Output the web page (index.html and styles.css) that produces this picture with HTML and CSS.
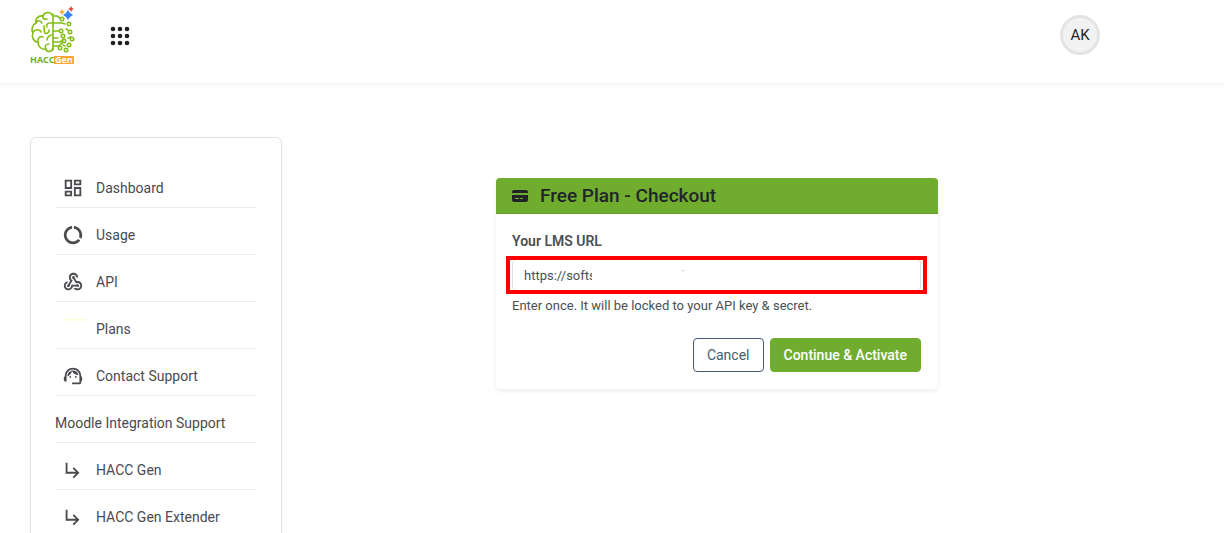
FILE: index.html
```
<!DOCTYPE html>
<html lang="en">
<head>
<meta charset="UTF-8">
<meta name="viewport" content="width=device-width, initial-scale=1.0">
<title>Free Plan - Checkout</title>
    <link rel="stylesheet" href="styles.css">
</head>
<body>
    <header class="topbar">
        <a href="#" class="logo" aria-label="HACC Gen">
            <svg width="46" height="60" viewBox="0 0 46 60">
                <!-- left half: brain -->
                <g fill="none" stroke="#84bd16" stroke-width="1.6" stroke-linecap="round" stroke-linejoin="round">
                    <path d="M22 9C20 5 14 6 13 10C8 9 5 13 6 17C2 19 1 24 3 27C1 31 4 36 8 36C8 41 12 44 16 43C17 47 22 46 23 42"/>
                    <path d="M13 10C12 12 14 14 17 13M6 17C7 14 11 14 12 17M3 26C5 23 10 23 11 26M8 36C7 32 10 30 13 31M16 43C14 40 16 38 19 38M22 17H20C17 17 16 19 17 21M14 20C15 23 13 25 15 27C17 28 19 27 19 24M22 29C20 29 17 31 17 34"/>
                    <path d="M23 8V44"/>
                    <!-- right half: circuit -->
                    <path d="M23 10H27L30 12M23 17H32L35 18M23 25H29M23 32H28M23 36H30L34 33M23 40H29L33 36"/>
                    <circle cx="32" cy="13" r="1.7"/>
                    <circle cx="39" cy="18" r="1.7"/>
                    <circle cx="31" cy="25" r="1.7"/>
                    <circle cx="40" cy="26" r="1.7"/>
                    <circle cx="42" cy="33" r="1.7"/>
                    <circle cx="33" cy="30" r="1.7"/>
                    <circle cx="34" cy="35" r="1.7"/>
                    <circle cx="39" cy="39" r="1.7"/>
                    <circle cx="30" cy="42" r="1.7"/>
                    <circle cx="36" cy="44" r="1.7"/>
                    <path d="M38 24L36 23M41 31L38 32M35 40L33 39"/>
                </g>
                <!-- sparkles -->
                <path fill="#3b82f6" d="M38 4L40 7L43 9L40 11L38 14L36 11L33 9L36 7Z"/>
                <path fill="#fba72c" d="M32 3L33 5L35 6L33 7L32 9L31 7L29 6L31 5Z"/>
                <path fill="#ea4335" d="M41 0L42 2L44 3L42 4L41 6L40 4L38 3L40 2Z"/>
                <rect x="24" y="50" width="20" height="8" fill="#fba72c"/>
                <text class="logo-hacc" x="0" y="57">HACC</text>
                <text class="logo-gen" x="25" y="57">Gen</text>
            </svg>
        </a>
        <button type="button" class="apps" aria-label="Apps">
            <svg width="20" height="20" viewBox="0 0 20 20" fill="#202124">
                <circle cx="3" cy="3" r="2.3"/><circle cx="10" cy="3" r="2.3"/><circle cx="17" cy="3" r="2.3"/>
                <circle cx="3" cy="10" r="2.3"/><circle cx="10" cy="10" r="2.3"/><circle cx="17" cy="10" r="2.3"/>
                <circle cx="3" cy="17" r="2.3"/><circle cx="10" cy="17" r="2.3"/><circle cx="17" cy="17" r="2.3"/>
            </svg>
        </button>
        <button type="button" class="avatar">AK</button>
    </header>

    <div class="page">
        <nav class="sidebar">
            <ul class="menu">
                <li><a href="#">
                    <svg class="icon" viewBox="0 0 24 24"><path d="M19 5v2h-4V5h4M9 5v6H5V5h4m10 8v6h-4v-6h4M9 17v2H5v-2h4M21 3h-8v6h8V3zM11 3H3v10h8V3zm10 8h-8v10h8V11zm-10 4H3v6h8v-6z"/></svg>
                    Dashboard</a></li>
                <li><a href="#">
                    <svg class="icon" viewBox="0 0 24 24"><path d="M13 2.050v3.030c3.390.490 6 3.390 6 6.920 0 .900-.180 1.750-.480 2.540l2.600 1.530c.560-1.240.880-2.620.880-4.070 0-5.180-3.950-9.450-9-9.950zM12 19c-3.870 0-7-3.130-7-7 0-3.530 2.610-6.430 6-6.920V2.050c-5.060.500-9 4.760-9 9.950 0 5.520 4.470 10 9.990 10 3.310 0 6.240-1.610 8.060-4.090l-2.600-1.530C16.170 17.980 14.210 19 12 19z"/></svg>
                    Usage</a></li>
                <li><a href="#">
                    <svg class="icon" viewBox="0 0 24 24"><path d="M10 15h5.880c.270-.310.670-.500 1.120-.500.830 0 1.500.670 1.500 1.500s-.670 1.500-1.500 1.500c-.440 0-.840-.190-1.120-.500H11.900c-.460 2.280-2.480 4-4.900 4-2.760 0-5-2.240-5-5 0-2.420 1.720-4.440 4-4.900v2.070c-1.160.420-2 1.530-2 2.830 0 1.650 1.350 3 3 3s3-1.350 3-3v-1zm2.500-11c1.650 0 3 1.350 3 3h2c0-2.760-2.240-5-5-5s-5 2.240-5 5c0 1.430.600 2.710 1.550 3.620l-2.350 3.900c-.680.140-1.200.750-1.200 1.480 0 .830.670 1.500 1.500 1.500s1.500-.670 1.500-1.500c0-.160-.020-.310-.070-.450l3.380-5.630C10.490 9.610 9.500 8.420 9.500 7c0-1.650 1.350-3 3-3zm4.500 9c-.640 0-1.230.200-1.720.540l-3.050-5.070C11.530 8.350 11 7.740 11 7c0-.830.670-1.500 1.500-1.500S14 6.170 14 7c0 .150-.020.290-.060.430l2.190 3.650c.280-.050.570-.080.870-.080 2.760 0 5 2.240 5 5s-2.240 5-5 5c-1.850 0-3.470-1.010-4.330-2.500h2.670c.480.320 1.050.500 1.660.500 1.650 0 3-1.350 3-3s-1.350-3-3-3z"/></svg>
                    API</a></li>
                <li><a href="#">
                    <svg class="icon icon-plans" viewBox="0 0 24 24"><path d="M2 1h24v2H2z"/></svg>
                    Plans</a></li>
                <li><a href="#">
                    <svg class="icon" viewBox="0 0 24 24"><path d="M21 12.220C21 6.730 16.740 3 12 3c-4.690 0-9 3.650-9 9.280-.600.340-1 .980-1 1.720v2c0 1.100.900 2 2 2h1v-6.100c0-3.870 3.130-7 7-7s7 3.130 7 7V19h-8v2h8c1.100 0 2-.900 2-2v-1.220c.590-.310 1-.920 1-1.640v-2.300c0-.700-.410-1.310-1-1.620z"/><circle cx="9" cy="13" r="1"/><circle cx="15" cy="13" r="1"/><path d="M18 11.030C17.520 8.180 15.040 6 12.050 6c-3.030 0-6.290 2.510-6.030 6.450 2.470-1.010 4.330-3.210 4.860-5.890 1.310 2.630 4 4.440 7.120 4.470z"/></svg>
                    Contact Support</a></li>
                <li><a href="#" class="plain">Moodle Integration Support</a></li>
                <li><a href="#">
                    <svg class="icon" viewBox="0 0 24 24"><path d="M19 15l-6 6-1.420-1.420L15.170 16H4V4h2v10h9.170l-3.590-3.580L13 9l6 6z"/></svg>
                    HACC Gen</a></li>
                <li><a href="#">
                    <svg class="icon" viewBox="0 0 24 24"><path d="M19 15l-6 6-1.420-1.420L15.170 16H4V4h2v10h9.170l-3.590-3.580L13 9l6 6z"/></svg>
                    HACC Gen Extender</a></li>
            </ul>
        </nav>

        <main class="content">
            <form class="card">
                <h1 class="card-header">
                    <svg width="16" height="16" viewBox="0 0 16 16" fill="#212529"><path d="M0 4a2 2 0 0 1 2-2h12a2 2 0 0 1 2 2v1H0zM0 7v5a2 2 0 0 0 2 2h12a2 2 0 0 0 2-2V7zM3 10h4v1H3zM8 10h3v1H8z" fill-rule="evenodd"/></svg>
                    Free Plan - Checkout
                </h1>
                <div class="card-body">
                    <label for="lms_url">Your LMS URL</label>
                    <div class="field">
                        <input type="text" id="lms_url" value="https://softs">
                        <span class="mask"></span>
                    </div>
                    <p class="help">Enter once. It will be locked to your API key &amp; secret.</p>
                    <div class="actions">
                        <button type="button" class="btn btn-outline">Cancel</button>
                        <button type="submit" class="btn btn-green">Continue &amp; Activate</button>
                    </div>
                </div>
            </form>
        </main>
    </div>
</body>
</html>
```
FILE: styles.css
```
*{
    box-sizing: border-box;
}
body{
    margin: 0;
    font-family: Roboto, "Liberation Sans", sans-serif;
    font-size: 14px;
    color: #495057;
    background: #fff;
}
button, input{
    font-family: inherit;
}

/* top bar */
.topbar{
    display: flex;
    align-items: flex-start;
    height: 83px;
    padding: 6px 124px 0 30px;
    box-shadow: 0 2px 4px rgba(0,0,0,0.05);
}
.logo-hacc, .logo-gen{
    font-family: "Open Sans", sans-serif;
    font-size: 9px;
    font-weight: 700;
    fill: #6fae2e;
}
.logo-gen{
    fill: #fff;
}
.apps{
    margin: 20px 0 0 34px;
    padding: 0;
    border: none;
    background: none;
    line-height: 0;
}
.avatar{
    width: 40px;
    height: 40px;
    margin: 9px 0 0 auto;
    padding: 0;
    border: 3px solid #e4e4e4;
    border-radius: 50%;
    background: #f2f2f2;
    font-size: 15px;
    color: #212529;
}

/* layout */
.page{
    display: grid;
    grid-template-columns: 252px 1fr;
    gap: 24px;
    padding: 54px 96px 0 30px;
}
.sidebar{
    padding: 23px 24px;
    border: 1px solid #dee2e6;
    border-radius: 6px;
    box-shadow: 0 2px 4px rgba(0,0,0,0.05);
}
.menu{
    margin: 0;
    padding: 0;
    list-style: none;
}
.menu a{
    display: flex;
    align-items: center;
    gap: 12px;
    height: 47px;
    padding: 15px 0 8px 7px;
    border-bottom: 1px solid #e9ecef;
    color: #4a4a4f;
    text-decoration: none;
}
.menu .plain{
    padding-left: 0;
}
.icon{
    width: 22px;
    height: 22px;
    fill: #4a4a4f;
    overflow: visible;
}
.icon-plans{
    fill: #fffdd8;
}

/* checkout */
.card{
    max-width: 442px;
    margin: 41px auto 0;
    border-radius: 4px;
    box-shadow: 0 2px 4px rgba(0,0,0,0.08);
}
.card-header{
    display: flex;
    align-items: center;
    gap: 12px;
    height: 36px;
    margin: 0;
    padding: 0 16px;
    border-bottom: 1px solid #65a02a;
    border-radius: 4px 4px 0 0;
    background: #70ad2f;
    font-size: 19px;
    font-weight: 500;
    color: #212529;
}
.card-body{
    padding: 17px 17px 17px 16px;
}
.card-body label{
    display: block;
    margin-bottom: 8px;
    font-weight: 600;
    line-height: 20px;
}
.field{
    position: relative;
}
.field input{
    display: block;
    width: 100%;
    height: 32px;
    padding: 0 11px;
    border: 1px solid #dee2e6;
    border-radius: 4px;
    font-size: 13px;
    color: #495057;
}
/* red frame around the url field */
.field::after{
    content: "";
    position: absolute;
    inset: -3px -6px;
    border: 4px solid #f00;
    pointer-events: none;
}
/* hides the rest of the url */
.mask{
    position: absolute;
    top: 4px;
    left: 80px;
    width: 120px;
    height: 24px;
    background: #fff;
}
.mask::after{
    content: "";
    position: absolute;
    top: 7px;
    right: 28px;
    width: 2px;
    height: 1px;
    background: #a9d3ee;
}
.help{
    margin: 5px 0 0;
    font-size: 13px;
    line-height: 20px;
}
.actions{
    display: flex;
    justify-content: flex-end;
    gap: 6px;
    margin-top: 22px;
}
.btn{
    height: 34px;
    padding: 0 13px;
    border: 1px solid #70ad2f;
    border-radius: 4px;
    font-size: 14px;
}
.btn-outline{
    border-color: #475b70;
    background: #fff;
    color: #475b70;
}
.btn-green{
    background: #70ad2f;
    font-weight: 500;
    color: #fff;
}
```
